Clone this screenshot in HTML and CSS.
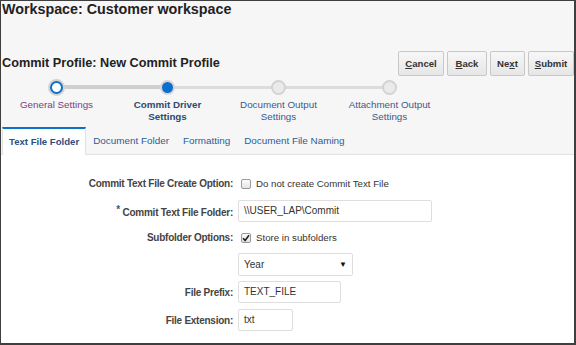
FILE: index.html
```html
<!DOCTYPE html>
<html lang="en">
<head>
  <meta charset="UTF-8">
  <title>Commit Profile</title>
  <link rel="stylesheet" href="styles.css">
</head>
<body>
  <div class="frame">
    <h1 class="workspace-title">Workspace: Customer workspace</h1>

    <div class="profile-bar">
      <h2 class="profile-title">Commit Profile: New Commit Profile</h2>
      <div class="actions">
        <button class="btn btn-cancel"><u>C</u>ancel</button>
        <button class="btn btn-back"><u>B</u>ack</button>
        <button class="btn btn-next">Ne<u>x</u>t</button>
        <button class="btn btn-submit"><u>S</u>ubmit</button>
      </div>
    </div>

    <!-- train of wizard steps -->
    <div class="train">
      <div class="train-line"></div>
      <div class="train-line done"></div>
      <div class="step visited">
        <span class="dot"></span>
        <span class="step-label">General Settings</span>
      </div>
      <div class="step current">
        <span class="dot"></span>
        <span class="step-label">Commit Driver<br>Settings</span>
      </div>
      <div class="step">
        <span class="dot"></span>
        <span class="step-label">Document Output<br>Settings</span>
      </div>
      <div class="step">
        <span class="dot"></span>
        <span class="step-label">Attachment Output<br>Settings</span>
      </div>
    </div>

    <div class="tabs">
      <div class="tab active">Text File Folder</div>
      <div class="tab">Document Folder</div>
      <div class="tab">Formatting</div>
      <div class="tab">Document File Naming</div>
    </div>

    <div class="content">
      <div class="form">
        <label class="field-label">Commit Text File Create Option:</label>
        <div class="field">
          <span class="checkbox"></span>
          <span class="check-text">Do not create Commit Text File</span>
        </div>

        <label class="field-label"><span class="required">*</span> Commit Text File Folder:</label>
        <div class="field">
          <div class="input input-folder">\\USER_LAP\Commit</div>
        </div>

        <label class="field-label">Subfolder Options:</label>
        <div class="field">
          <span class="checkbox checked">
            <svg width="8" height="8" viewBox="0 0 8 8"><path d="M1 4.2 L3.1 6.4 L7 1.2" fill="none" stroke="#222" stroke-width="1.6"/></svg>
          </span>
          <span class="check-text">Store in subfolders</span>
        </div>

        <span class="field-label"></span>
        <div class="field">
          <div class="input select">Year<span class="caret">&#9660;</span></div>
        </div>

        <label class="field-label">File Prefix:</label>
        <div class="field">
          <div class="input input-prefix">TEXT_FILE</div>
        </div>

        <label class="field-label">File Extension:</label>
        <div class="field">
          <div class="input input-ext">txt</div>
        </div>
      </div>
    </div>
  </div>
</body>
</html>
```

FILE: styles.css
```css
* {
  box-sizing: border-box;
}

body {
  margin: 0;
  font-family: "Liberation Sans", Arial, sans-serif;
  background-color: #fff;
}

.frame {
  width: 576px;
  height: 345px;
  border: 1px solid #3f3f3f;
  border-bottom-width: 2px;
  border-right-width: 2px;
  background-color: #f6f6f6;
  display: flex;
  flex-direction: column;
  overflow: hidden;
}

.workspace-title {
  margin: 0;
  padding-left: 1px;
  font-size: 14.3px;
  line-height: 17px;
  color: #222;
}

.profile-bar {
  display: flex;
  justify-content: space-between;
  align-items: center;
  margin-top: 32px;
  height: 26px;
}

.profile-title {
  margin: 0;
  padding-left: 1px;
  font-size: 12.7px;
  color: #222;
}

.actions {
  display: flex;
  gap: 3px;
}

.btn {
  height: 25px;
  padding: 0;
  border: 1px solid #c8c8c8;
  border-radius: 2px;
  background: linear-gradient(#f7f7f7, #e6e6e6);
  font-family: inherit;
  font-size: 9.6px;
  font-weight: bold;
  color: #333;
}

.btn-cancel { width: 46px; }
.btn-back { width: 40px; }
.btn-next { width: 35px; }
.btn-submit { width: 46px; }

/* wizard train */
.train {
  position: relative;
  display: grid;
  grid-template-columns: repeat(4, 111px);
  height: 51px;
  padding-top: 4px;
}

.train-line {
  position: absolute;
  top: 10px;
  left: 56px;
  width: 333px;
  height: 3px;
  background-color: #dcdcdc;
}

.train-line.done {
  top: 9px;
  width: 112px;
  height: 4px;
  background-color: #cfcfcf;
}

.step {
  position: relative;
  display: flex;
  flex-direction: column;
  align-items: center;
}

.dot {
  width: 15px;
  height: 15px;
  border-radius: 50%;
  background-color: #eaeaea;
  border: 2px solid #d3d3d3;
}

.visited .dot {
  background-color: #fff;
  border: 2px solid #0a72c8;
  box-shadow: 0 0 0 2px #d3d3d3;
  width: 13px;
  height: 13px;
  margin-top: 1px;
  margin-bottom: 1px;
}

.current .dot {
  background-color: #0a6fd0;
  border: 2px solid #d6d6d6;
}

.step-label {
  margin-top: 4px;
  font-size: 9.8px;
  line-height: 12px;
  text-align: center;
  color: #3a5a90;
}

.visited .step-label {
  color: #7a3c8a;
}

.current .step-label {
  font-weight: bold;
  color: #2d4a70;
}

/* tabs */
.tabs {
  display: flex;
  height: 28px;
  padding-left: 1px;
  border-bottom: 1px solid #e2e2e2;
}

.tab {
  padding: 0 7px;
  font-size: 9.9px;
  line-height: 28px;
  color: #2c5c98;
}

.tab.active {
  padding: 0 6px;
  background-color: #fff;
  border-top: 2px solid #0a72c8;
  border-left: 1px solid #e2e2e2;
  border-right: 1px solid #e2e2e2;
  margin-bottom: -1px;
  font-size: 9.6px;
  line-height: 26px;
  font-weight: bold;
  color: #2b4f7e;
}

/* form */
.content {
  flex: 1;
  background-color: #fff;
  padding-top: 15px;
}

.form {
  display: grid;
  grid-template-columns: 232px 1fr;
  grid-template-rows: 27px 27px 27px 27px 28px 28px;
  column-gap: 5px;
  align-items: center;
}

.field-label {
  text-align: right;
  font-size: 10px;
  letter-spacing: -0.25px;
  font-weight: bold;
  color: #444;
}

.required {
  color: #2c5c98;
  vertical-align: 3px;
  font-size: 10px;
}

.field {
  display: flex;
  align-items: center;
}

.checkbox {
  display: flex;
  align-items: center;
  justify-content: center;
  width: 10px;
  height: 10px;
  margin-left: 3px;
  margin-right: 5px;
  border: 1px solid #9a9a9a;
  border-radius: 2px;
  background: linear-gradient(#fdfdfd, #e4e4e4);
}

.check-text {
  font-size: 9.7px;
  color: #333;
}

.input {
  height: 22px;
  padding-left: 5px;
  border: 1px solid #dedede;
  border-radius: 2px;
  background-color: #fff;
  font-size: 10px;
  line-height: 20px;
  color: #333;
}

.input-folder { width: 194px; }
.input-prefix { width: 103px; }
.input-ext { width: 55px; }

.select {
  display: flex;
  justify-content: space-between;
  width: 115px;
  height: 23px;
  padding-right: 5px;
  line-height: 21px;
}

.caret {
  font-size: 8px;
  color: #111;
}
```
